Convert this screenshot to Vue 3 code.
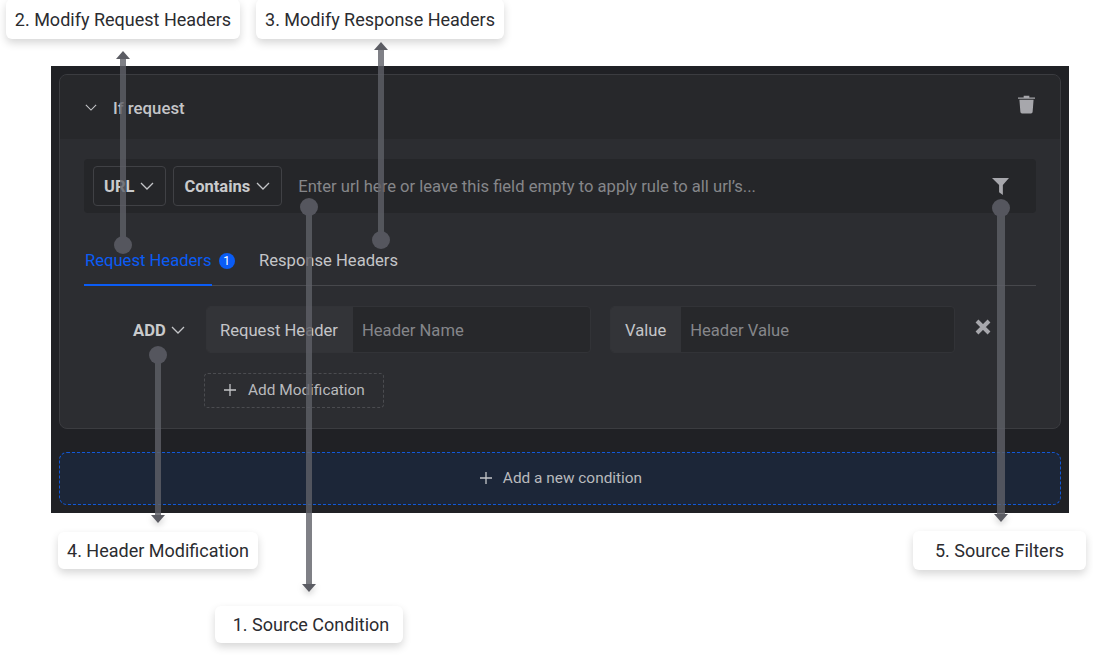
<script setup>
// annotation labels around the screenshot
const callouts = [
  { text: "2. Modify Request Headers", x: 6, y: -1, w: 234, h: 40, shift: 0 },
  { text: "3. Modify Response Headers", x: 256, y: -1, w: 248, h: 40, shift: 0 },
  { text: "4. Header Modification", x: 58, y: 532, w: 200, h: 37, shift: 0 },
  { text: "1. Source Condition", x: 215, y: 606, w: 188, h: 37, shift: 4 },
  { text: "5. Source Filters", x: 913, y: 531, w: 173, h: 39, shift: 0 },
];

// x = line centre, dot = y of the round end, tip = y of the arrow tip
const pointers = [
  { x: 123, dot: 245, tip: 51, up: true, w: 6 },
  { x: 380.5, dot: 240, tip: 42, up: true, w: 6 },
  { x: 309, dot: 207, tip: 592, up: false, w: 6 },
  { x: 157.5, dot: 355, tip: 523, up: false, w: 6 },
  { x: 1001, dot: 208, tip: 522, up: false, w: 8 },
];

function calloutStyle(c) {
  return {
    left: c.x + "px",
    top: c.y + "px",
    width: c.w + "px",
    height: c.h + "px",
    paddingLeft: c.shift + "px",
  };
}

function lineStyle(p) {
  const top = p.up ? p.tip + 6 : p.dot;
  const bottom = p.up ? p.dot : p.tip - 6;
  return {
    left: p.x - p.w / 2 + "px",
    top: top + "px",
    width: p.w + "px",
    height: bottom - top + "px",
  };
}

function dotStyle(p) {
  return { left: p.x - 9 + "px", top: p.dot - 9 + "px" };
}

function arrowStyle(p) {
  return {
    left: p.x - 7 + "px",
    top: (p.up ? p.tip : p.tip - 8) + "px",
  };
}
</script>

<template>
  <div class="page">
    <div class="panel">
      <section class="card">
        <header class="card-head">
          <svg class="chev head-chev" viewBox="0 0 14 8"><path d="M1 1l6 6 6-6" /></svg>
          <span class="head-title">If request</span>
          <svg class="trash" viewBox="0 0 18 20">
            <path d="M0 3h18v1.400H0zM6 1.200h6V3H6z" />
            <path d="M1.500 5.500h15l-1 12.700a1.800 1.800 0 0 1-1.800 1.800H4.300a1.800 1.800 0 0 1-1.800-1.800z" />
          </svg>
        </header>

        <div class="card-body">
          <div class="source">
            <button class="select">URL<svg class="chev" viewBox="0 0 14 8"><path d="M1 1l6 6 6-6" /></svg></button>
            <button class="select">Contains<svg class="chev" viewBox="0 0 14 8"><path d="M1 1l6 6 6-6" /></svg></button>
            <span class="placeholder url">Enter url here or leave this field empty to apply rule to all url’s...</span>
            <svg class="filter" viewBox="0 0 18 18"><path d="M0 0h18l-6.500 7.500V18l-4-3V7.500z" /></svg>
          </div>

          <nav class="tabs">
            <div class="tab active">Request Headers<span class="badge">1</span></div>
            <div class="tab">Response Headers</div>
          </nav>

          <div class="mod-row">
            <div class="mod-type">ADD<svg class="chev" viewBox="0 0 14 8"><path d="M1 1l6 6 6-6" /></svg></div>
            <div class="input-group name">
              <span class="addon">Request Header</span>
              <span class="placeholder field">Header Name</span>
            </div>
            <div class="input-group value">
              <span class="addon">Value</span>
              <span class="placeholder field">Header Value</span>
            </div>
            <svg class="close" viewBox="0 0 18 18"><path d="M3 3l12 12M15 3L3 15" /></svg>
          </div>

          <button class="add-mod">
            <svg class="plus" viewBox="0 0 12 12"><path d="M6 0v12M0 6h12" /></svg>
            Add Modification
          </button>
        </div>
      </section>

      <button class="add-condition">
        <svg class="plus" viewBox="0 0 12 12"><path d="M6 0v12M0 6h12" /></svg>
        Add a new condition
      </button>
    </div>

    <div v-for="c in callouts" :key="c.text" class="callout" :style="calloutStyle(c)">
      {{ c.text }}
    </div>

    <template v-for="(p, i) in pointers" :key="i">
      <div class="line" :style="lineStyle(p)"></div>
      <div class="dot" :style="dotStyle(p)"></div>
      <div class="arrow" :class="p.up ? 'up' : 'down'" :style="arrowStyle(p)"></div>
    </template>
  </div>
</template>

<style>
html,
body {
  margin: 0;
  background: #fff;
  overflow: hidden;
}
</style>

<style scoped>
.page {
  position: relative;
  width: 1093px;
  height: 656px;
  padding: 66px 0 0 51px;
  box-sizing: border-box;
  overflow: hidden;
  background: #fff;
  font-family: Roboto, "Liberation Sans", sans-serif;
}

button {
  font-family: inherit;
  background: none;
  cursor: pointer;
}

svg {
  display: block;
  flex: none;
}

.panel {
  width: 1018px;
  height: 447px;
  padding: 8px;
  box-sizing: border-box;
  background: #202125;
  display: flex;
  flex-direction: column;
  gap: 23px;
}

.card {
  height: 355px;
  box-sizing: border-box;
  border: 1px solid #3b3c40;
  border-radius: 8px;
  background: #2c2d31;
  overflow: hidden;
}

.card-head {
  height: 64px;
  background: #27282b;
  display: flex;
  align-items: center;
  padding: 0 25px;
  color: #c4c5c8;
  font-size: 16.800px;
  font-weight: 500;
}

.chev {
  width: 14px;
  height: 8px;
  fill: none;
  stroke: #c4c5c8;
  stroke-width: 1.3;
}

.head-title {
  margin-left: 16px;
  margin-top: 1px;
}

.head-chev {
  width: 12px;
  height: 7px;
  margin-top: 1px;
}

.trash {
  width: 17px;
  height: 20px;
  margin-left: auto;
  margin-top: -7px;
  fill: #a7a7ac;
}

.card-body {
  padding: 20px 24px 0;
}

.source {
  height: 54px;
  box-sizing: border-box;
  border-radius: 4px;
  background: #252629;
  display: flex;
  align-items: center;
  padding: 0 27px 0 9px;
  gap: 7px;
}

.select {
  height: 40px;
  padding: 0 11px 0 10px;
  border: 1px solid #404145;
  border-radius: 4px;
  display: flex;
  align-items: center;
  gap: 6px;
  color: #c9cacc;
  font-size: 16.500px;
  font-weight: 700;
}

.placeholder {
  color: #85868a;
  font-size: 16.600px;
}

.url {
  margin-left: 9px;
}

.filter {
  width: 17px;
  height: 17px;
  margin-left: auto;
  fill: #a7a7ac;
}

.tabs {
  height: 73px;
  box-sizing: border-box;
  border-bottom: 1px solid #47484c;
  display: flex;
  align-items: flex-end;
  gap: 24px;
}

.tab {
  height: 34px;
  box-sizing: border-box;
  color: #c4c5c8;
  font-size: 16.600px;
  display: flex;
  align-items: flex-start;
}

.tab.active {
  color: #0a5cf5;
  width: 128px;
  height: 35px;
  padding-left: 1px;
  margin-bottom: -1px;
  border-bottom: 2px solid #0a5cf5;
  white-space: nowrap;
}

.badge {
  flex: none;
  width: 16px;
  height: 16px;
  margin: 2px 0 0 7px;
  border-radius: 50%;
  background: #0a5cf5;
  color: #fff;
  font-size: 12px;
  line-height: 16px;
  text-align: center;
}

.tab.active + .tab {
  margin-left: 23px;
}

.mod-row {
  display: flex;
  align-items: flex-start;
  margin-top: 20px;
}

.mod-type {
  width: 122px;
  height: 47px;
  box-sizing: border-box;
  padding: 1px 0 0 49px;
  display: flex;
  align-items: center;
  gap: 5px;
  color: #c9cacc;
  font-size: 16.600px;
  font-weight: 700;
}

.input-group {
  height: 47px;
  box-sizing: border-box;
  border: 1px solid #323337;
  border-radius: 4px;
  background: #27282b;
  display: flex;
  align-items: center;
  overflow: hidden;
}

.input-group.name {
  width: 385px;
}

.input-group.value {
  width: 345px;
  margin-left: 19px;
}

.addon {
  height: 100%;
  box-sizing: border-box;
  display: flex;
  align-items: center;
  padding: 1px 15px 0 14px;
  background: #333438;
  color: #c4c5c8;
  font-size: 16.600px;
}

.name .addon {
  padding-left: 13px;
}

.field {
  margin-left: 9px;
  padding-top: 1px;
}

.close {
  width: 18px;
  height: 18px;
  margin: 12px 0 0 19px;
  fill: none;
  stroke: #a7a7ac;
  stroke-width: 4;
}

.add-mod {
  width: 180px;
  height: 35px;
  margin: 20px 0 0 120px;
  padding: 0 0 1px 19px;
  box-sizing: border-box;
  border: 1px dashed #4b4c50;
  border-radius: 4px;
  display: flex;
  align-items: center;
  gap: 12px;
  color: #b9babd;
  font-size: 15.400px;
}

.plus {
  width: 12px;
  height: 12px;
  fill: none;
  stroke: #c4c5c8;
  stroke-width: 1.300;
}

.add-condition {
  height: 53px;
  flex: none;
  padding: 0 0 1px 2px;
  box-sizing: border-box;
  border: 1px dashed #1259d8;
  border-radius: 8px;
  background: #1c2638;
  display: flex;
  align-items: center;
  justify-content: center;
  gap: 11px;
  color: #b9babd;
  font-size: 15.400px;
}

.callout {
  position: absolute;
  box-sizing: border-box;
  display: flex;
  align-items: center;
  justify-content: center;
  background: #fff;
  border-radius: 6px;
  box-shadow: 0 4px 8px rgba(0, 0, 0, 0.16);
  color: #2b2c30;
  font-size: 18px;
  white-space: nowrap;
}

.line {
  position: absolute;
  background: rgba(95, 96, 104, 0.8);
}

.dot {
  position: absolute;
  width: 18px;
  height: 18px;
  border-radius: 50%;
  background: #55565e;
}

.arrow {
  position: absolute;
  width: 0;
  height: 0;
  border-left: 7px solid transparent;
  border-right: 7px solid transparent;
}

.arrow.up {
  border-bottom: 8px solid #5b5c63;
}

.arrow.down {
  border-top: 8px solid #5b5c63;
  filter: drop-shadow(0 3px 3px rgba(0, 0, 0, 0.2));
}
</style>
